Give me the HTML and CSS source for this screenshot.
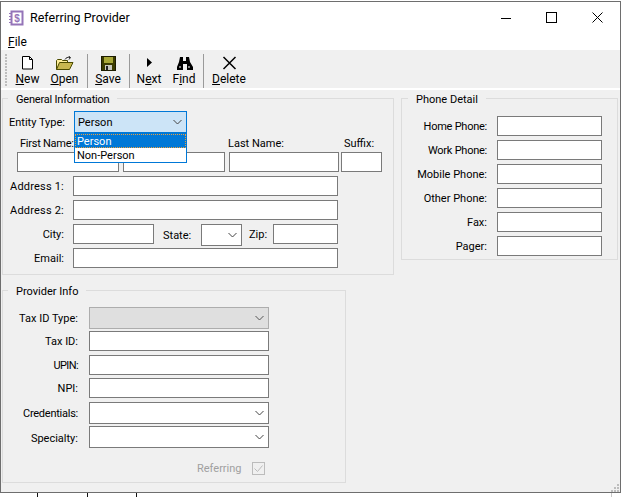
FILE: index.html
```html
<!DOCTYPE html>
<html lang="en">
<head>
<meta charset="utf-8">
<title>Referring Provider</title>
<link rel="stylesheet" href="styles.css">
</head>
<body>
<div class="window">
  <header class="titlebar">
    <svg class="app-icon" width="16" height="16" viewBox="0 0 16 16">
      <rect x="3.5" y="1.5" width="11" height="13" fill="#fff" stroke="#9474b8" stroke-width="2"/>
      <path d="M1 3.5h3M1 6.5h3M1 9.5h3M1 12.5h3" stroke="#9474b8" stroke-width="1.2"/>
      <text x="9" y="12" class="app-icon-text">$</text>
    </svg>
    <span class="title">Referring Provider</span>
    <div class="winctl">
      <svg width="10" height="10" viewBox="0 0 10 10"><path d="M0 5.5h10" stroke="#000"/></svg>
      <svg width="11" height="11" viewBox="0 0 11 11"><rect x=".5" y=".5" width="10" height="10" fill="none" stroke="#000"/></svg>
      <svg width="11" height="11" viewBox="0 0 11 11"><path d="M.5.5l10 10M10.5.5l-10 10" stroke="#000" fill="none"/></svg>
    </div>
  </header>
  <nav class="menubar"><span><u>F</u>ile</span></nav>
  <div class="toolbar">
    <div class="grip"></div>
    <div class="tool tool-new">
      <svg width="13" height="15" viewBox="0 0 13 15"><path d="M1.5.5h7l3 3v9.500H1.500z" fill="#fff" stroke="#000"/><path d="M8.500.5v3h3" fill="none" stroke="#000"/></svg>
      <span><u>N</u>ew</span>
    </div>
    <div class="tool tool-open">
      <svg width="18" height="15" viewBox="0 0 18 15">
        <path d="M.5 13.500V4.500l1-1h4l1 1h5v2" fill="#ffef9a" stroke="#4b4b00"/>
        <path d="M.5 13.500l3-7h13.500l-3.500 7z" fill="#c8b850" stroke="#4b4b00"/>
        <path d="M9 3.500c1-2 3-2.500 5-2M12.500 0l2 1.500-1.500 2" fill="none" stroke="#222"/>
      </svg>
      <span><u>O</u>pen</span>
    </div>
    <div class="sep"></div>
    <div class="tool tool-save">
      <svg width="15" height="15" viewBox="0 0 15 15">
        <rect x=".5" y=".5" width="14" height="14" fill="#3c3c00" stroke="#1c1c00"/>
        <rect x="3" y="1" width="9" height="6" fill="#a8a838"/>
        <rect x="4" y="9" width="7" height="5" fill="#c9c9c0"/>
        <rect x="5" y="10" width="2" height="4" fill="#222"/>
      </svg>
      <span><u>S</u>ave</span>
    </div>
    <div class="sep sep-b"></div>
    <div class="tool tool-next">
      <svg width="15" height="15" viewBox="0 0 15 15"><path d="M5 2l5 4.500-5 4.500z" fill="#000"/></svg>
      <span>N<u>e</u>xt</span>
    </div>
    <div class="tool tool-find">
      <svg width="17" height="15" viewBox="0 0 17 15">
        <path d="M4 1h3v4h3V1h3l1 5 3 5v3h-6V8H7v6H1v-3l2-5z" fill="#000"/>
        <path d="M3 11h2M12 11h2" stroke="#fff"/>
      </svg>
      <span>F<u>i</u>nd</span>
    </div>
    <div class="sep sep-c"></div>
    <div class="tool tool-delete">
      <svg width="15" height="15" viewBox="0 0 15 15"><path d="M1.500 1l12 12M13.500 1l-12 12" stroke="#000" stroke-width="1.500" fill="none"/></svg>
      <span><u>D</u>elete</span>
    </div>
  </div>
  <main class="form">
    <div class="col-left">
      <fieldset class="group group-general">
        <legend>General Information</legend>
        <div class="entity-row">
          <label class="entity-label">Entity Type:</label>
          <div class="select select-focus select-entity">
            <span>Person</span>
            <svg class="chev" width="9" height="6" viewBox="0 0 9 6"><path d="M.5 1l4 4 4-4" fill="none" stroke="#444"/></svg>
            <div class="droplist">
              <div class="opt opt-active">Person</div>
              <div class="opt">Non-Person</div>
            </div>
          </div>
        </div>
        <div class="name-row">
          <div class="name-col name-first"><label class="tight">First Name:</label><input class="input" type="text"></div>
          <div class="name-col name-middle"><label></label><input class="input" type="text"></div>
          <div class="name-col name-last"><label>Last Name:</label><input class="input" type="text"></div>
          <div class="name-col name-suffix"><label>Suffix:</label><input class="input" type="text"></div>
        </div>
        <div class="row"><label class="lab-gen wide">Address 1:</label><input class="input w-addr" type="text"></div>
        <div class="row"><label class="lab-gen wide">Address 2:</label><input class="input w-addr" type="text"></div>
        <div class="row row-city">
          <label class="lab-gen">City:</label>
          <input class="input w-city" type="text">
          <label class="lab-state">State:</label>
          <div class="select w-state"><svg class="chev" width="9" height="6" viewBox="0 0 9 6"><path d="M.5 1l4 4 4-4" fill="none" stroke="#444"/></svg></div>
          <label class="lab-zip">Zip:</label>
          <input class="input w-zip" type="text">
        </div>
        <div class="row"><label class="lab-gen">Email:</label><input class="input w-addr" type="text"></div>
      </fieldset>
      <fieldset class="group group-provider">
        <legend>Provider Info</legend>
        <div class="row-p first"><label class="lab-prov">Tax ID Type:</label>
          <div class="select select-disabled w-prov"><svg class="chev" width="9" height="6" viewBox="0 0 9 6"><path d="M.5 1l4 4 4-4" fill="none" stroke="#555"/></svg></div></div>
        <div class="row-p gap2"><label class="lab-prov">Tax ID:</label><input class="input w-prov" type="text"></div>
        <div class="row-p gap4"><label class="lab-prov tighter">UPIN:</label><input class="input w-prov" type="text"></div>
        <div class="row-p gap3"><label class="lab-prov">NPI:</label><input class="input w-prov" type="text"></div>
        <div class="row-p gap4"><label class="lab-prov tight">Credentials:</label>
          <div class="select w-prov"><svg class="chev" width="9" height="6" viewBox="0 0 9 6"><path d="M.5 1l4 4 4-4" fill="none" stroke="#444"/></svg></div></div>
        <div class="row-p gap2"><label class="lab-prov low">Specialty:</label>
          <div class="select w-prov"><svg class="chev" width="9" height="6" viewBox="0 0 9 6"><path d="M.5 1l4 4 4-4" fill="none" stroke="#444"/></svg></div></div>
        <div class="referring">
          <span>Referring</span>
          <svg width="13" height="13" viewBox="0 0 13 13"><rect x=".5" y=".5" width="12" height="12" fill="#f0f0f0" stroke="#bcbcbc"/><path d="M2.500 6.500l3 3 5-6" fill="none" stroke="#bcbcbc"/></svg>
        </div>
      </fieldset>
    </div>
    <fieldset class="group group-phone">
      <legend>Phone Detail</legend>
      <div class="row-ph first"><label class="tight">Home Phone:</label><input class="input w-ph" type="text"></div>
      <div class="row-ph"><label class="tight">Work Phone:</label><input class="input w-ph" type="text"></div>
      <div class="row-ph"><label>Mobile Phone:</label><input class="input w-ph" type="text"></div>
      <div class="row-ph"><label>Other Phone:</label><input class="input w-ph" type="text"></div>
      <div class="row-ph"><label>Fax:</label><input class="input w-ph" type="text"></div>
      <div class="row-ph"><label>Pager:</label><input class="input w-ph" type="text"></div>
    </fieldset>
    <svg class="resize" width="8" height="8" viewBox="0 0 8 8" fill="#bdbdbd">
      <rect x="6" y="0" width="2" height="2"/><rect x="3" y="3" width="2" height="2"/><rect x="6" y="3" width="2" height="2"/>
      <rect x="0" y="6" width="2" height="2"/><rect x="3" y="6" width="2" height="2"/><rect x="6" y="6" width="2" height="2"/>
    </svg>
  </main>
</div>
<div class="under">
  <i class="tick"></i><i class="tick"></i><i class="tick"></i><i class="tick tick-light"></i>
</div>
</body>
</html>
```
FILE: styles.css
```css
html, body { margin: 0; height: 100%; }
body {
  background: #fff;
  overflow: hidden;
  font-family: Roboto, "Liberation Sans", sans-serif;
  font-size: 11px;
  color: #000;
  padding-top: 1px;
  box-sizing: border-box;
}
.window {
  width: 621px;
  height: 492px;
  box-sizing: border-box;
  border: 1px solid #6e6e6e;
  background: #fff;
  display: flex;
  flex-direction: column;
}
.titlebar {
  height: 31px;
  display: flex;
  align-items: center;
  padding-left: 7px;
  font-size: 12.500px;
  flex: none;
}
.app-icon { flex: none; }
.app-icon-text { font: bold 10px "Liberation Sans", sans-serif; fill: #9474b8; text-anchor: middle; }
.title { margin-left: 6px; }
.winctl { margin-left: auto; display: flex; align-items: center; gap: 35px; padding-right: 17px; }
.menubar { height: 16px; padding: 1px 0 0 7px; font-size: 12px; line-height: 17px; flex: none; }
.toolbar {
  height: 38px;
  background: #f0f0f0;
  display: flex;
  flex: none;
  padding-left: 4px;
  margin-bottom: 2px;
  font-size: 12px;
}
.grip {
  width: 2px;
  height: 32px;
  margin-top: 4px;
  background: repeating-linear-gradient(to bottom, #bdbdbd 0 2px, transparent 2px 3px);
}
.tool { display: flex; flex-direction: column; align-items: center; padding-top: 6px; }
.tool svg { display: block; height: 15px; }
.tool span { line-height: 14px; margin-top: 1px; }
.tool-new { width: 35px; margin-left: 3px; }
.tool-open { width: 39px; }
.tool-save { width: 36px; }
.tool-next { width: 36px; }
.tool-find { width: 34px; }
.tool-delete { width: 44px; }
.sep { width: 1px; height: 34px; margin: 4px 2px 0 3px; background: #9a9a9a; }
.sep-b { margin-right: 1px; }
.sep-c { margin: 4px 3px 0 2px; }

.form {
  flex: 1;
  background: #f0f0f0;
  position: relative;
  display: flex;
  align-items: flex-start;
  gap: 7px;
  padding-left: 1px;
}
.col-left { display: flex; flex-direction: column; align-items: flex-start; gap: 8px; margin-top: 1px; }
.group { border: 1px solid #dcdcdc; margin: 0; padding: 0; box-sizing: border-box; min-width: 0; }
.group legend { margin-left: 5px; padding: 0 8px; line-height: 14px; font-size: 11px; position: relative; top: 2px; }
.group-general { width: 392px; height: 184px; padding: 6px 0 0 0; }
.group-general legend { letter-spacing: -.2px; }
.group-provider { width: 344px; height: 200px; padding: 10px 0 0 0; }
.group-phone { width: 217px; height: 169px; margin-top: 1px; padding: 11px 0 0 0; }
.group-phone legend { margin-left: 6px; }

label { display: block; line-height: 14px; white-space: nowrap; }
.tight { letter-spacing: -.25px; }
.tighter { letter-spacing: -.6px; }
.wide { letter-spacing: .2px; }
.input {
  display: block;
  box-sizing: border-box;
  height: 20px;
  margin: 0;
  padding: 0;
  border: 1px solid #7a7a7a;
  background: #fff;
  border-radius: 0;
  outline: none;
  flex: none;
}
.select {
  position: relative;
  box-sizing: border-box;
  height: 22px;
  border: 1px solid #7a7a7a;
  background: #fff;
  flex: none;
  display: flex;
  align-items: center;
}
.chev { position: absolute; right: 4px; top: 7px; }
.select-focus { border-color: #0078d7; background: #cce4f7; }
.select-focus span { padding-left: 3px; font-size: 11px; }
.select-disabled { background: #dfdfdf; border-color: #adadad; }
.select-entity { width: 113px; }
.droplist {
  position: absolute;
  left: -1px;
  top: 21px;
  width: 113px;
  box-sizing: border-box;
  background: #fff;
  border: 1px solid #0078d7;
  z-index: 2;
}
.opt { height: 13px; padding: 1px 0 0 2px; line-height: 14px; }
.opt-active { background: #0078d7; color: #fff; outline: 1px dotted #e8a040; outline-offset: -1px; }

.entity-row { display: flex; align-items: center; padding-left: 6px; }
.entity-label { width: 65px; margin-top: 2px; }
.name-row { display: flex; padding-left: 14px; margin-top: 4px; }
.name-col label { height: 15px; line-height: 14px; }
.name-first { width: 102px; margin-right: 4px; }
.name-first label { padding-left: 3px; }
.name-middle { width: 102px; margin-right: 4px; }
.name-last { width: 110px; margin-right: 2px; }
.name-last label { margin-left: -1px; }
.name-suffix { width: 41px; }
.name-suffix label { padding-left: 3px; }
.name-col .input { width: 100%; }

.row { display: flex; align-items: center; height: 20px; margin-top: 4px; }
.lab-gen { margin-top: 2px; }
.row-city { align-items: flex-start; }
.row-city label { line-height: 22px; margin-top: 0; }
.row-city .lab-state { line-height: 24px; }
.lab-gen { width: 61px; text-align: right; margin-right: 9px; }
.w-addr { width: 265px; }
.w-city { width: 81px; }
.lab-state { margin-left: 9px; width: 38px; }
.w-state { width: 41px; }
.lab-zip { margin-left: 7px; width: 24px; }
.w-zip { width: 65px; }

.row-p { display: flex; align-items: center; }
.gap2 { margin-top: 2px; }
.gap3 { margin-top: 3px; }
.gap4 { margin-top: 4px; }
.lab-prov { width: 75px; text-align: right; margin-right: 11px; margin-top: 2px; }
.lab-prov.low { margin-top: 4px; }
.w-prov { width: 180px; }
.referring {
  display: flex;
  align-items: center;
  margin-top: 14px;
  padding-left: 194px;
  gap: 10px;
  color: #a0a0a0;
  height: 13px;
}
.referring svg { display: block; flex: none; }

.row-ph { display: flex; align-items: center; margin-top: 4px; }
.row-ph.first { margin-top: 0; }
.row-ph label { width: 85px; text-align: right; margin-right: 10px; margin-top: 2px; }
.w-ph { width: 105px; }

.resize { position: absolute; right: 1px; bottom: 0; }
.under { display: flex; height: 4px; }
.tick { display: block; width: 1px; height: 4px; background: #111; }
.tick:nth-child(1) { margin-left: 37px; }
.tick:nth-child(2) { margin-left: 49px; }
.tick:nth-child(3) { margin-left: 48px; }
.tick-light { margin-left: 474px; background: #c8c8c8; }
```
